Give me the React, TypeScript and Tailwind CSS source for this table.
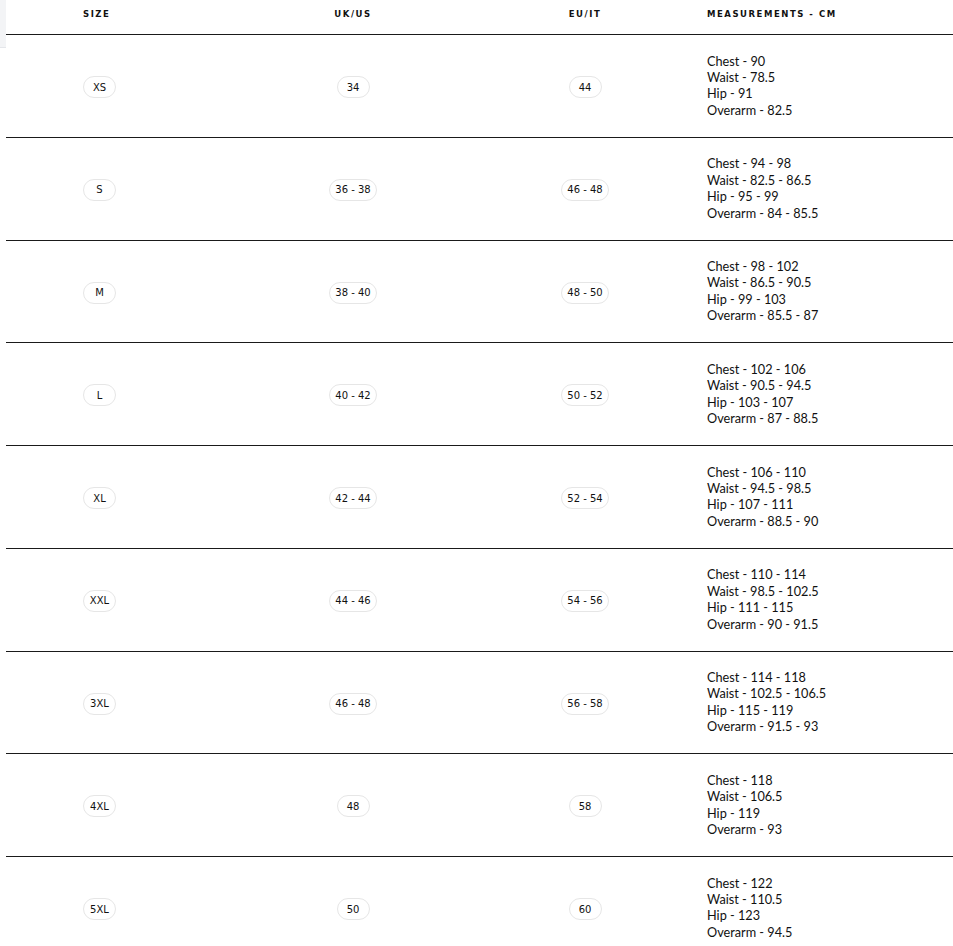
const rows = [
  { size: 'XS', uk: '34', eu: '44', m: ['Chest - 90', 'Waist - 78.5', 'Hip - 91', 'Overarm - 82.5'] },
  { size: 'S', uk: '36 - 38', eu: '46 - 48', m: ['Chest - 94 - 98', 'Waist - 82.5 - 86.5', 'Hip - 95 - 99', 'Overarm - 84 - 85.5'] },
  { size: 'M', uk: '38 - 40', eu: '48 - 50', m: ['Chest - 98 - 102', 'Waist - 86.5 - 90.5', 'Hip - 99 - 103', 'Overarm - 85.5 - 87'] },
  { size: 'L', uk: '40 - 42', eu: '50 - 52', m: ['Chest - 102 - 106', 'Waist - 90.5 - 94.5', 'Hip - 103 - 107', 'Overarm - 87 - 88.5'] },
  { size: 'XL', uk: '42 - 44', eu: '52 - 54', m: ['Chest - 106 - 110', 'Waist - 94.5 - 98.5', 'Hip - 107 - 111', 'Overarm - 88.5 - 90'] },
  { size: 'XXL', uk: '44 - 46', eu: '54 - 56', m: ['Chest - 110 - 114', 'Waist - 98.5 - 102.5', 'Hip - 111 - 115', 'Overarm - 90 - 91.5'] },
  { size: '3XL', uk: '46 - 48', eu: '56 - 58', m: ['Chest - 114 - 118', 'Waist - 102.5 - 106.5', 'Hip - 115 - 119', 'Overarm - 91.5 - 93'] },
  { size: '4XL', uk: '48', eu: '58', m: ['Chest - 118', 'Waist - 106.5', 'Hip - 119', 'Overarm - 93'] },
  { size: '5XL', uk: '50', eu: '60', m: ['Chest - 122', 'Waist - 110.5', 'Hip - 123', 'Overarm - 94.5'] },
]

function Pill({ children }: { children: string }) {
  return (
    <span
      className="inline-flex h-[22px] min-w-[33px] items-center justify-center rounded-full border border-[#e6e6e6] px-[5px] text-[10px] text-[#111]"
      style={{ fontFamily: 'Verdana, "DejaVu Sans", sans-serif' }}
    >
      {children}
    </span>
  )
}

export default function App() {
  return (
    <div className="flex bg-white">
      <div className="h-[48px] w-[6px] shrink-0 border-b border-[#e4e6ea] bg-[#f3f4f6]" />
      <div className="flex-1 text-[#111]">
        <div
          className="grid h-[35px] grid-cols-[230px_234px_230px_1fr] items-center border-b border-[#1a1a1a] pb-[6px] text-[8.5px] font-bold uppercase tracking-[0.18em]"
          style={{ fontFamily: '"DejaVu Sans", Verdana, sans-serif' }}
        >
          <div className="pl-[77px]">Size</div>
          <div className="text-center">UK/US</div>
          <div className="text-center">EU/IT</div>
          <div className="pl-[7px]">Measurements - cm</div>
        </div>
        {rows.map((r) => (
          <div
            key={r.size}
            className="grid h-[102.75px] grid-cols-[230px_234px_230px_1fr] items-center border-b border-[#1a1a1a] pb-px"
          >
            <div className="pl-[77px]">
              <Pill>{r.size}</Pill>
            </div>
            <div className="text-center">
              <Pill>{r.uk}</Pill>
            </div>
            <div className="text-center">
              <Pill>{r.eu}</Pill>
            </div>
            <div
              className="pl-[7px] text-[12.7px] leading-[16.4px]"
              style={{ fontFamily: 'Lato, "Open Sans", sans-serif' }}
            >
              {r.m.map((line) => (
                <div key={line}>{line}</div>
              ))}
            </div>
          </div>
        ))}
      </div>
    </div>
  )
}
